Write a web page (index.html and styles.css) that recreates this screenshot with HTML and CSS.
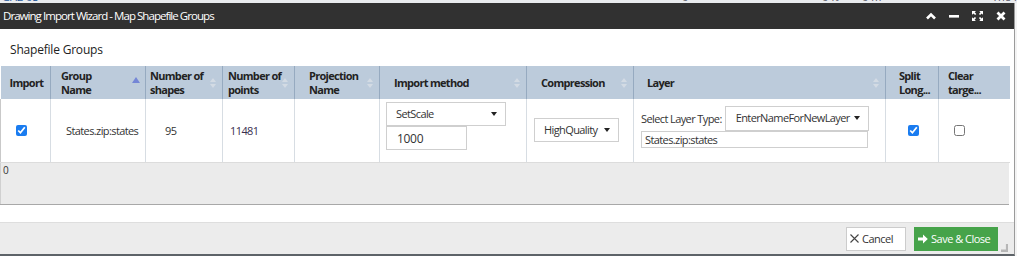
FILE: index.html
```html
<!DOCTYPE html>
<html lang="en">
<head>
  <meta charset="UTF-8" />
  <title>Drawing Import Wizard - Map Shapefile Groups</title>
  <link rel="stylesheet" href="styles.css">
</head>
<body>
  <div class="behind">
    <span class="b1">GA2 03</span><span class="b2">0</span><span class="b3">0 ft</span><span class="b4">0 m</span><span class="b5">The field cannot be displ...</span><span class="b6">0.10</span><span class="b7">IN - Approved for enter...</span><span class="b8">KY.0.1.0</span>
  </div>

  <div class="dialog">
    <div class="titlebar">
      <span class="title">Drawing Import Wizard - Map Shapefile Groups</span>
      <div class="win-actions">
        <svg width="10" height="8" viewBox="0 0 10 8"><path d="M1 6.5 L5 2.5 L9 6.5" fill="none" stroke="#fff" stroke-width="2.6"/></svg>
        <svg width="10" height="8" viewBox="0 0 10 8"><rect x="0" y="3" width="10" height="2.6" fill="#fff"/></svg>
        <svg width="11" height="10" viewBox="0 0 11 10"><path d="M0 0h4l-1.3 1.3 1.6 1.6-1.2 1.2-1.6-1.6L0 3.8z M11 0v3.8l-1.3-1.3-1.6 1.6-1.2-1.2 1.6-1.6L7.2 0z M0 10V6.2l1.3 1.3 1.6-1.6 1.2 1.2-1.6 1.6L4 10z M11 10H7.2l1.3-1.3-1.6-1.6 1.2-1.2 1.6 1.6L11 6.2z" fill="#fff"/></svg>
        <svg width="10" height="10" viewBox="0 0 10 10"><path d="M1.5 1.5 L8.5 8.5 M8.5 1.5 L1.5 8.5" stroke="#fff" stroke-width="2.8"/></svg>
      </div>
    </div>

    <div class="content">
      <div class="section-title">Shapefile Groups</div>

      <div class="grid">
        <table>
          <colgroup>
            <col style="width:50px"><col style="width:95px"><col style="width:77px"><col style="width:72px"><col style="width:85px">
            <col style="width:147px"><col style="width:107px"><col style="width:252px"><col style="width:53px"><col style="width:71px">
          </colgroup>
          <thead>
            <tr>
              <th class="p9">Import</th>
              <th class="p10">Group<br>Name<span class="sort-up"></span></th>
              <th class="p4">Number of<br>shapes<span class="sort"></span></th>
              <th class="p5">Number of<br>points<span class="sort"></span></th>
              <th class="p14">Projection<br>Name<span class="sort"></span></th>
              <th class="p14">Import method<span class="sort"></span></th>
              <th class="p14">Compression<span class="sort"></span></th>
              <th class="p13">Layer<span class="sort"></span></th>
              <th class="p13">Split<br>Long...</th>
              <th class="p9">Clear<br>targe...</th>
            </tr>
          </thead>
          <tbody>
            <tr>
              <td class="c16"><input type="checkbox" class="chk" checked></td>
              <td class="p16">States.zip:states</td>
              <td class="p20">95</td>
              <td class="p7">11481</td>
              <td></td>
              <td class="method">
                <div class="dropdown wide">SetScale<span class="caret"></span></div>
                <div class="textbox short">1000</div>
              </td>
              <td class="p8">
                <div class="dropdown comp">HighQuality<span class="caret"></span></div>
              </td>
              <td class="layer">
                <div class="layer-type">
                  <span>Select Layer Type:</span>
                  <div class="dropdown layer-dd">EnterNameForNewLayer<span class="caret"></span></div>
                </div>
                <div class="textbox layer-name">States.zip:states</div>
              </td>
              <td class="c23"><input type="checkbox" class="chk" checked></td>
              <td class="c15"><input type="checkbox" class="chk"></td>
            </tr>
          </tbody>
        </table>
        <div class="grid-footer">0</div>
      </div>
    </div>

    <div class="footer">
      <button class="btn btn-cancel">
        <svg width="9" height="9" viewBox="0 0 9 9"><path d="M0.5 0.5 L8.5 8.5 M8.5 0.5 L0.5 8.5" stroke="#444" stroke-width="1.1"/></svg>
        Cancel
      </button>
      <button class="btn btn-save">
        <svg width="10" height="10" viewBox="0 0 10 10"><path d="M0 3.6h5V0.6L9.8 5 5 9.4V6.4H0z" fill="#fff"/></svg>
        Save &amp; Close
      </button>
      <span class="grip"></span>
    </div>
  </div>
</body>
</html>
```

FILE: styles.css
```css
body {
  margin: 0;
  background: #f3f3f3;
  font-family: 'Open Sans', 'Liberation Sans', sans-serif;
  font-size: 11px;
  color: #333;
  overflow: hidden;
}

/* page underneath the dialog, only a sliver shows */
.behind {
  height: 3px;
  overflow: hidden;
  background: #e9ebee;
  white-space: nowrap;
}

.behind span {
  display: inline-block;
  vertical-align: top;
  margin-top: -9px;
  line-height: 12px;
  color: #556;
  font-size: 11px;
}

.behind .b1 { width: 680px; padding-left: 2px; color: #2a5a9a; }
.behind .b2 { width: 140px; }
.behind .b3 { width: 40px; }
.behind .b4 { width: 130px; }

.dialog {
  width: 1014px;
  height: 251px;
  border-right: 1px solid #9a9a9a;
  border-bottom: 2px solid #5d6368;
  background: #fff;
  display: flex;
  flex-direction: column;
}

.titlebar {
  height: 26px;
  background: #313131;
  color: #fff;
  display: flex;
  align-items: center;
  justify-content: space-between;
  padding: 0 8px 0 3px;
}

.title {
  font-size: 11.5px;
  letter-spacing: -0.95px;
  margin-top: -2px;
}

.win-actions {
  display: flex;
  align-items: center;
  gap: 13px;
}

.win-actions svg { display: block; }

.content {
  flex: 1;
}

.section-title {
  font-size: 12px;
  letter-spacing: -0.2px;
  color: #222;
  padding: 13px 10px 8px;
  line-height: 16px;
}

.grid {
  width: 1009px;
  border-bottom: 1px solid #a8a8a8;
}

table {
  border-collapse: collapse;
  table-layout: fixed;
  width: 1009px;
}

th {
  background: #bccbdb;
  height: 33px;
  box-sizing: border-box;
  padding: 0 12px 0 0;
  text-align: left;
  font-weight: bold;
  font-size: 11px;
  letter-spacing: -0.7px;
  line-height: 14px;
  color: #222;
  border-left: 1px solid #96aac0;
  position: relative;
  white-space: nowrap;
}

th:first-child { border-left: none; }

th.p4 { padding-left: 4px; }
th.p5 { padding-left: 5px; }
th.p9 { padding-left: 9px; }
th.p10 { padding-left: 10px; }
th.p13 { padding-left: 13px; }
th.p14 { padding-left: 14px; }

/* sort arrows in the header */
.sort, .sort-up {
  position: absolute;
  right: 5px;
  top: 12px;
  width: 7px;
  height: 10px;
}

.sort::before, .sort::after, .sort-up::before {
  content: "";
  position: absolute;
  left: 0;
  border-left: 3.5px solid transparent;
  border-right: 3.5px solid transparent;
}

.sort::before { top: 0; border-bottom: 4px solid #d3dbe4; }
.sort::after { bottom: 0; border-top: 4px solid #d3dbe4; }

.sort-up { top: 11px; right: 6px; }
.sort-up::before { top: 0; border-bottom: 6px solid #7486d6; border-left-width: 4px; border-right-width: 4px; }

tbody tr { height: 63px; }

td {
  padding: 0;
  border-left: 1px solid #d7dde3;
  border-bottom: 1px solid #dcdcdc;
  vertical-align: middle;
  white-space: nowrap;
  font-size: 11px;
  letter-spacing: -0.6px;
  color: #333;
}

td:first-child { border-left: 1px solid #c9c9c9; }

td.c16 { padding-left: 15px; }
td.c23 { padding-left: 22px; }
td.c15 { padding-left: 15px; }
td.p7 { padding-left: 7px; color: #3a2f4f; }
td.p8 { padding-left: 7px; }
td.p16 { padding-left: 15px; }
td.p20 { padding-left: 19px; }

.chk {
  width: 11px;
  height: 11px;
  margin: 0;
  display: block;
  accent-color: #1a7cf0;
}

.dropdown, .textbox {
  box-sizing: border-box;
  height: 24px;
  border: 1px solid #cfcfcf;
  background: #fff;
  line-height: 22px;
  font-size: 11px;
  color: #333;
  position: relative;
}

.dropdown { padding-left: 9px; }

.caret {
  position: absolute;
  right: 8px;
  top: 9px;
  border-left: 3.5px solid transparent;
  border-right: 3.5px solid transparent;
  border-top: 4px solid #222;
}

td.method {
  padding: 3px 0 0 6px;
  vertical-align: top;
}

.dropdown.wide { width: 120px; }

.textbox.short {
  width: 81px;
  font-size: 12px;
  letter-spacing: -0.3px;
  padding-left: 10px;
  line-height: 23px;
}

.dropdown.comp { width: 85px; padding-left: 9px; }

td.layer {
  padding: 7px 0 0 7px;
  vertical-align: top;
}

.layer-type {
  display: flex;
  align-items: center;
  gap: 3px;
}

.layer-dd { width: 144px; height: 25px; padding-left: 10px; }

.textbox.layer-name {
  width: 227px;
  height: 17px;
  line-height: 15px;
  padding-left: 3px;
}

.grid-footer {
  background: #ebebeb;
  height: 41px;
  padding-left: 2px;
  line-height: 14px;
  font-size: 10px;
  border-left: 1px solid #d0d0d0;
}

.footer {
  height: 31px;
  background: #ececec;
  border-top: 1px solid #dedede;
  display: flex;
  align-items: center;
  justify-content: flex-end;
  gap: 8px;
  padding-right: 16px;
  position: relative;
}

.btn {
  height: 24px;
  border: 1px solid #cccccc;
  font-family: 'Open Sans', 'Liberation Sans', sans-serif;
  font-size: 11px;
  letter-spacing: -0.5px;
  white-space: nowrap;
  display: flex;
  align-items: center;
  gap: 3px;
  cursor: pointer;
}

.btn-cancel { background: #fff; color: #333; width: 60px; padding: 0 0 0 3px; }
.btn-save { background: #46a34a; border-color: #46a34a; color: #fff; width: 84px; padding: 0 0 0 3px; }

.grip {
  position: absolute;
  right: 6px;
  bottom: 2px;
  width: 7px;
  height: 8px;
  background:
    radial-gradient(circle, #777 0.6px, transparent 0.8px) 0 0 / 2px 2px;
  clip-path: polygon(100% 0, 100% 100%, 0 100%, 0 70%, 70% 70%, 70% 0);
}
```
